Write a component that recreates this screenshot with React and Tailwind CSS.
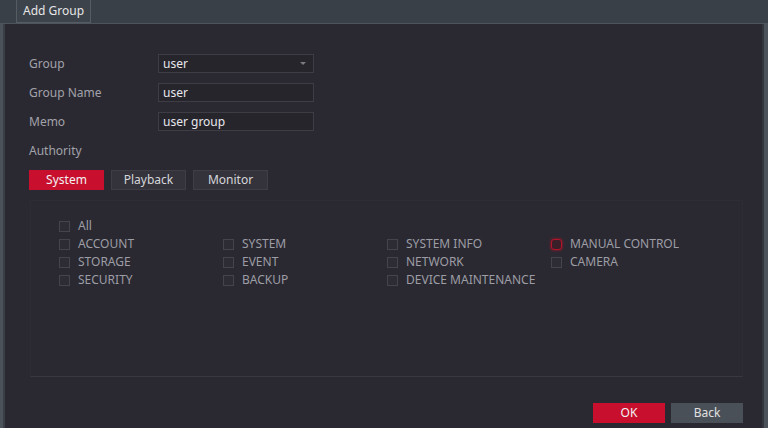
const FIELDS = [
  { label: "Group", value: "user", select: true },
  { label: "Group Name", value: "user" },
  { label: "Memo", value: "user group" },
];

const TABS = ["System", "Playback", "Monitor"];

const COLUMNS = [
  ["ACCOUNT", "STORAGE", "SECURITY"],
  ["SYSTEM", "EVENT", "BACKUP"],
  ["SYSTEM INFO", "NETWORK", "DEVICE MAINTENANCE"],
  ["MANUAL CONTROL", "CAMERA"],
];

function Check({ label, active }) {
  return (
    <div className="flex h-[18px] items-center gap-[8px]">
      <span
        className={
          active
            ? "h-[11px] w-[11px] rounded-[3px] border border-[#b3142c] bg-[#3a1f28] shadow-[0_0_3px_#b3142c]"
            : "h-[11px] w-[11px] border border-[#45444d] bg-[#2d2c34]"
        }
      />
      <span className="text-[12px] text-[#9d9da5]">{label}</span>
    </div>
  );
}

export default function App() {
  return (
    <div
      className="flex h-[428px] w-[768px] flex-col overflow-hidden bg-[#2a2931]"
      style={{ fontFamily: '"Noto Sans", "Open Sans", sans-serif' }}
    >
      <div className="flex h-[24px] shrink-0 border-b border-[#4d545c] bg-[#3a4048] pl-[16px]">
        <div className="flex h-[23px] items-center border-x border-b border-[#555c64] bg-[#3d434b] px-[6px] text-[12px] text-[#e6e6e6]">
          Add Group
        </div>
      </div>

      <div className="flex flex-1">
        <div className="w-[5px] border-r-2 border-[#3a3f46] bg-[#4b525a]" />

        <div className="flex flex-1 flex-col pl-[24px] pr-[14px] pt-[30px]">
          <div className="flex flex-col gap-[10px]">
            {FIELDS.map((f) => (
              <div key={f.label} className="flex h-[19px] items-center">
                <span className="w-[129px] text-[12px] text-[#a2a2aa]">{f.label}</span>
                <div className="relative flex h-[19px] w-[156px] items-center border border-[#3e3d46] bg-[#26252c] px-[4px] text-[12px] text-[#e8e8ec]">
                  {f.value}
                  {f.select && (
                    <span className="absolute right-[7px] top-[7px] h-0 w-0 border-x-[3px] border-t-[3px] border-x-transparent border-t-[#7a7a82]" />
                  )}
                </div>
              </div>
            ))}
            <div className="flex h-[19px] items-center text-[12px] text-[#a2a2aa]">Authority</div>
          </div>

          <div className="mt-[10px] flex gap-[7px]">
            {TABS.map((t, i) => (
              <div
                key={t}
                className={
                  i === 0
                    ? "flex h-[20px] w-[75px] items-center justify-center bg-[#c8102e] text-[12px] text-[#f2f2f2]"
                    : "flex h-[20px] w-[75px] items-center justify-center border border-[#3f3e47] bg-[#34333b] text-[12px] text-[#d6d6da]"
                }
              >
                {t}
              </div>
            ))}
          </div>

          <div className="ml-[1px] mt-[10px] flex h-[177px] w-[713px] flex-col border-x border-t border-b border-x-[#2d2c34] border-t-[#2e2d35] border-b-[#393841] pl-[28px] pt-[16px]">
            <Check label="All" />
            <div className="flex">
              {COLUMNS.map((col, ci) => (
                <div key={ci} className="flex w-[164px] flex-col">
                  {col.map((c) => (
                    <Check key={c} label={c} active={c === "MANUAL CONTROL"} />
                  ))}
                </div>
              ))}
            </div>
          </div>

          <div className="mt-[26px] flex w-[714px] justify-end gap-[6px]">
            <div className="flex h-[20px] w-[72px] items-center justify-center bg-[#c8102e] text-[12px] text-[#f2f2f2]">
              OK
            </div>
            <div className="flex h-[20px] w-[72px] items-center justify-center bg-[#4a5058] text-[12px] text-[#e0e0e0]">
              Back
            </div>
          </div>
        </div>

        <div className="w-[6px] border-l-2 border-[#33363d] bg-[#4b525a]" />
      </div>
    </div>
  );
}
